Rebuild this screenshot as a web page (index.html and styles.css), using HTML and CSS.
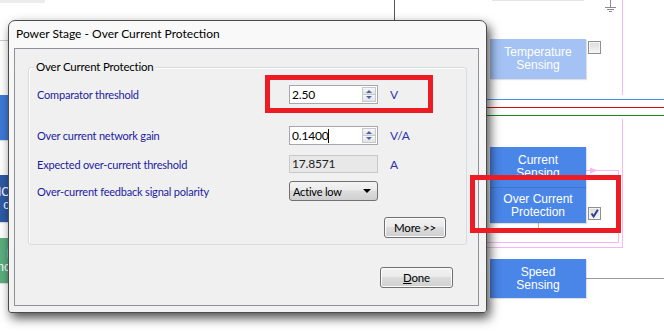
FILE: index.html
```html
<!DOCTYPE html>
<html lang="en">
<head>
    <meta charset="UTF-8">
    <title>Power Stage - Over Current Protection</title>
    <link rel="stylesheet" href="styles.css">
</head>
<body>
<div class="screen">
    <!-- diagram behind the dialog -->
    <svg class="wires" width="664" height="335" viewBox="0 0 664 335">
        <line x1="0" y1="40.5" x2="9" y2="40.5" stroke="#c9c9c9"/>
        <line x1="0" y1="1.5" x2="45" y2="1.5" stroke="#ececec" stroke-width="3"/>
        <line x1="394.5" y1="0" x2="394.5" y2="20" stroke="#555"/>
        <line x1="610.5" y1="0" x2="610.5" y2="7" stroke="#8a8a8a"/>
        <line x1="605" y1="7.5" x2="616" y2="7.5" stroke="#8a8a8a"/>
        <line x1="607" y1="9.5" x2="614" y2="9.5" stroke="#8a8a8a"/>
        <line x1="609" y1="11.5" x2="612" y2="11.5" stroke="#8a8a8a"/>
        <line x1="622.5" y1="0" x2="622.5" y2="95" stroke="#f7b8f2"/>
        <line x1="622.5" y1="119" x2="622.5" y2="248" stroke="#f7b8f2"/>
        <line x1="487" y1="99.5" x2="664" y2="99.5" stroke="#4a90e2"/>
        <line x1="487" y1="107.5" x2="664" y2="107.5" stroke="#cc1111"/>
        <line x1="487" y1="115.5" x2="664" y2="115.5" stroke="#1a8a1a"/>
        <line x1="586" y1="170.5" x2="618" y2="170.5" stroke="#f7b8f2"/>
        <path d="M590 167.5 L598 170.5 L590 173.5 Z" fill="#f7b8f2"/>
        <line x1="618.5" y1="170" x2="618.5" y2="243" stroke="#f7b8f2"/>
        <line x1="483" y1="242.5" x2="618" y2="242.5" stroke="#f7b8f2"/>
        <line x1="483" y1="247.5" x2="622" y2="247.5" stroke="#f7b8f2"/>
        <line x1="538.5" y1="222" x2="538.5" y2="233" stroke="#f0b24a"/>
        <line x1="586" y1="278.5" x2="664" y2="278.5" stroke="#9a9a9a"/>
        <line x1="492" y1="0.5" x2="584" y2="0.5" stroke="#e4e4e4"/>
    </svg>

    <div class="node node-left node-blue-light" style="top:95px;height:45px"></div>
    <div class="node node-left node-blue-dark" style="top:175px;height:47px">MC<br>o</div>
    <div class="node node-left node-green" style="top:238px;height:45px">I<br>nc</div>

    <div class="node node-faded" style="top:39px;height:40px">Temperature<br>Sensing</div>
    <div class="node" style="top:147px;height:40px">Current<br>Sensing</div>
    <div class="node node-overlap" style="top:187px;height:35px">Over Current<br>Protection</div>
    <div class="node" style="top:259px;height:39px">Speed<br>Sensing</div>

    <span class="checkbox" style="top:41px"></span>
    <span class="checkbox" style="top:207px">
        <svg width="11" height="11" viewBox="0 0 11 11"><path d="M2.5 5.5 L4.6 8.5 L8.8 1.8" fill="none" stroke="#2b3f8c" stroke-width="2"/></svg>
    </span>

    <!-- dialog window -->
    <div class="dialog">
        <div class="titlebar">Power Stage - Over Current Protection</div>
        <div class="client">
            <div class="group">
                <span class="group-title">Over Current Protection</span>
                <div class="row row-first">
                    <span class="label">Comparator threshold</span>
                    <span class="field">
                        <span class="field-text">2.50</span>
                        <span class="spin"><i class="up"></i><i class="down"></i></span>
                    </span>
                    <span class="unit">V</span>
                </div>
                <div class="row row-gain">
                    <span class="label">Over current network gain</span>
                    <span class="field">
                        <span class="field-text">0.1400<span class="caret"></span></span>
                        <span class="spin"><i class="up"></i><i class="down"></i></span>
                    </span>
                    <span class="unit">V/A</span>
                </div>
                <div class="row row-expected">
                    <span class="label">Expected over-current threshold</span>
                    <span class="field field-readonly"><span class="field-text">17.8571</span></span>
                    <span class="unit">A</span>
                </div>
                <div class="row row-polarity">
                    <span class="label">Over-current feedback signal polarity</span>
                    <span class="combo">Active low<i class="combo-arrow"></i></span>
                    <span class="unit"></span>
                </div>
                <div class="more-row">
                    <button class="btn btn-more">More &gt;&gt;</button>
                </div>
            </div>
            <div class="done-row">
                <button class="btn btn-done"><u>D</u>one</button>
            </div>
        </div>
    </div>

    <!-- red annotation boxes -->
    <div class="highlight" style="left:265px;top:75px;width:168px;height:38px"></div>
    <div class="highlight" style="left:470px;top:175px;width:151px;height:58px"></div>
</div>
</body>
</html>
```

FILE: styles.css
```css
body {
    margin: 0;
    background: #fff;
    font-family: Lato, "Liberation Sans", sans-serif;
}
.screen {
    position: relative;
    width: 664px;
    height: 335px;
    overflow: hidden;
    background: #fff;
}
.wires {
    position: absolute;
    left: 0;
    top: 0;
}

/* diagram blocks */
.node {
    position: absolute;
    left: 490px;
    width: 96px;
    display: flex;
    align-items: center;
    justify-content: center;
    text-align: center;
    background: #4a86e8;
    color: #fff;
    font-family: "Liberation Sans", sans-serif;
    font-size: 12px;
    line-height: 13px;
    box-shadow: 1px 1px 1px rgba(0, 0, 0, 0.12);
}
.node-faded {
    background: #a4c2f4;
}
.node-overlap {
    border-top: 1px solid #3f76cf;
}
.node-left {
    left: -60px;
    width: 70px;
    justify-content: flex-end;
    text-align: right;
    padding-right: 2px;
}
.node-blue-light {
    background: #3d7ad6;
}
.node-blue-dark {
    background: #2d5ba6;
}
.node-green {
    background: #5bae7f;
}
.checkbox {
    position: absolute;
    left: 588px;
    width: 11px;
    height: 11px;
    border: 1px solid #8e8f8f;
    background: linear-gradient(#dcdcdc, #f6f6f6);
    box-shadow: inset 0 0 0 1px #f4f4f4;
}
.checkbox svg {
    display: block;
}

/* dialog */
.dialog {
    position: absolute;
    left: 8px;
    top: 20px;
    width: 465px;
    height: 285px;
    display: flex;
    flex-direction: column;
    padding: 0 7px 6px 5px;
    border: 1px solid #4c4c4c;
    border-radius: 7px 7px 3px 3px;
    background: linear-gradient(#f9f9f9, #f1f1f1);
    box-shadow: 3px 5px 11px rgba(0, 0, 0, 0.7);
    font-family: Lato, "Liberation Sans", sans-serif;
    font-size: 11px;
    letter-spacing: -0.2px;
}
.titlebar {
    height: 27px;
    line-height: 26px;
    padding-left: 2px;
    font-size: 12px;
    letter-spacing: 0;
    color: #000;
}
.client {
    flex: 1;
    border: 1px solid #8e9298;
    background: #f0f0f0;
    display: flex;
    flex-direction: column;
}
.group {
    margin: 18px 11px 0 13px;
    padding: 0 20px 6px 8px;
    border: 1px solid #d5dce2;
    border-radius: 3px;
    box-shadow: inset 1px 1px 0 #fff;
}
.group-title {
    display: table;
    margin: -8px 0 0 -3px;
    padding: 0 2px;
    line-height: 14px;
    background: #f0f0f0;
    color: #000;
    font-size: 11.5px;
}
.row {
    display: grid;
    grid-template-columns: 240px 89px 1fr;
    column-gap: 12px;
    align-items: center;
}
.row-first {
    margin-top: 11px;
    height: 19px;
}
.row-gain {
    margin-top: 22px;
    height: 19px;
}
.row-expected {
    margin-top: 10px;
    height: 18px;
}
.row-polarity {
    margin-top: 8px;
    height: 20px;
}
.label {
    color: #1b1ba0;
}
.unit {
    color: #2f2fb0;
    font-size: 12px;
}
.field {
    display: flex;
    align-items: stretch;
    height: 19px;
    box-sizing: border-box;
    border: 1px solid #a5a9ae;
    background: #fff;
}
.field-text {
    flex: 1;
    padding-left: 2px;
    line-height: 17px;
    font-size: 12px;
    color: #000;
}
.caret {
    display: inline-block;
    width: 1px;
    height: 14px;
    vertical-align: -3px;
    background: #000;
}
.field-readonly {
    height: 18px;
    background: #e8e8e8;
    border-color: #c9c9c9;
}
.field-readonly .field-text {
    line-height: 16px;
    color: #222;
}
.spin {
    width: 14px;
    margin: 1px 1px 1px 0;
    display: flex;
    flex-direction: column;
}
.spin i {
    flex: 1;
    position: relative;
    border: 1px solid #c5c9ce;
    background: linear-gradient(#f7f7f7, #e3e3e3);
}
.spin i + i {
    border-top: none;
}
.spin i::after {
    content: "";
    position: absolute;
    left: 3px;
    top: 2px;
    border-left: 3px solid transparent;
    border-right: 3px solid transparent;
}
.spin .up::after {
    border-bottom: 3px solid #4a64a8;
}
.spin .down::after {
    top: 1px;
    border-top: 3px solid #4a64a8;
}
.combo {
    height: 20px;
    box-sizing: border-box;
    display: flex;
    align-items: center;
    justify-content: space-between;
    padding: 0 6px 0 3px;
    border: 1px solid #707070;
    border-radius: 3px;
    background: linear-gradient(#f3f3f3 0%, #ebebeb 45%, #dddddd 50%, #cfcfcf 100%);
    color: #000;
}
.combo-arrow {
    width: 0;
    height: 0;
    border-left: 4px solid transparent;
    border-right: 4px solid transparent;
    border-top: 4px solid #000;
}
.more-row {
    display: flex;
    justify-content: flex-end;
    margin-top: 16px;
}
.btn {
    height: 21px;
    box-sizing: border-box;
    border: 1px solid #707070;
    border-radius: 3px;
    background: linear-gradient(#f2f2f2 0%, #ebebeb 45%, #dddddd 50%, #cfcfcf 100%);
    box-shadow: inset 0 0 0 1px #fcfcfc;
    font-family: Lato, "Liberation Sans", sans-serif;
    font-size: 11.5px;
    letter-spacing: -0.2px;
    color: #000;
    padding: 0;
}
.btn-more {
    width: 62px;
}
.btn-done {
    width: 73px;
}
.btn u {
    text-decoration: underline;
}
.done-row {
    display: flex;
    justify-content: flex-end;
    margin: 22px 25px 0 0;
}

/* annotation */
.highlight {
    position: absolute;
    box-sizing: border-box;
    border: 5px solid #ed1c24;
}
```
